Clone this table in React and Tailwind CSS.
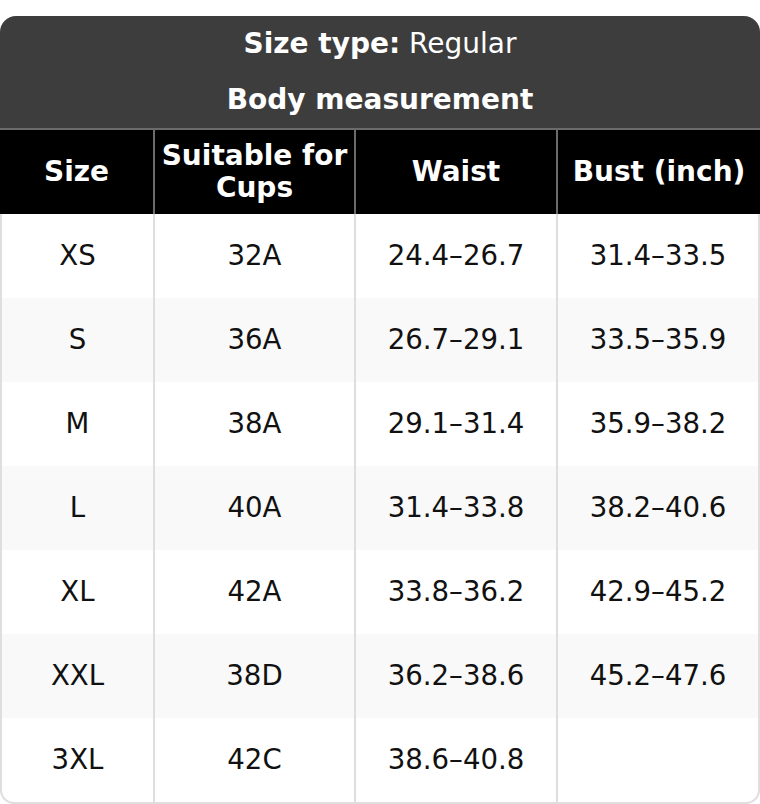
import React from "react";

const rows = [
  ["XS", "32A", "24.4–26.7", "31.4–33.5"],
  ["S", "36A", "26.7–29.1", "33.5–35.9"],
  ["M", "38A", "29.1–31.4", "35.9–38.2"],
  ["L", "40A", "31.4–33.8", "38.2–40.6"],
  ["XL", "42A", "33.8–36.2", "42.9–45.2"],
  ["XXL", "38D", "36.2–38.6", "45.2–47.6"],
  ["3XL", "42C", "38.6–40.8", ""],
];

const font = { fontFamily: '"DejaVu Sans", Verdana, sans-serif' };

export default function App() {
  return (
    <div className="w-[760px] bg-white pt-4" style={font}>
      <div className="flex flex-col">
        <div className="flex flex-col items-center rounded-t-[16px] bg-[#3d3d3d] pt-[12px] pb-[12px] gap-[24px] text-white text-[28px] leading-[32px]">
          <div>
            <span className="font-bold">Size type:</span> Regular
          </div>
          <div className="font-bold">Body measurement</div>
        </div>
        <div className="h-[2px] bg-[#6b6b6b]" />
        <div className="grid grid-cols-[153px_199px_200px_202px] gap-x-[2px] bg-[#6b6b6b] h-[84px]">
          {["Size", "Suitable for Cups", "Waist", "Bust (inch)"].map((h) => (
            <div
              key={h}
              className="flex items-center justify-center bg-black text-center text-white font-bold text-[28px] leading-[32px]"
            >
              {h}
            </div>
          ))}
        </div>
        <div className="flex flex-col rounded-b-[14px] overflow-hidden border-x-2 border-b-2 border-[#dedede] bg-[#dedede]">
          {rows.map((r, i) => (
            <div
              key={r[0]}
              className="grid grid-cols-[151px_199px_200px_200px] gap-x-[2px] h-[84px]"
            >
              {r.map((c, j) => (
                <div
                  key={j}
                  className={
                    "flex items-center justify-center text-[27.6px] text-[#111] " +
                    (i % 2 === 1 ? "bg-[#f9f9f9]" : "bg-white")
                  }
                >
                  {c}
                </div>
              ))}
            </div>
          ))}
        </div>
      </div>
    </div>
  );
}
